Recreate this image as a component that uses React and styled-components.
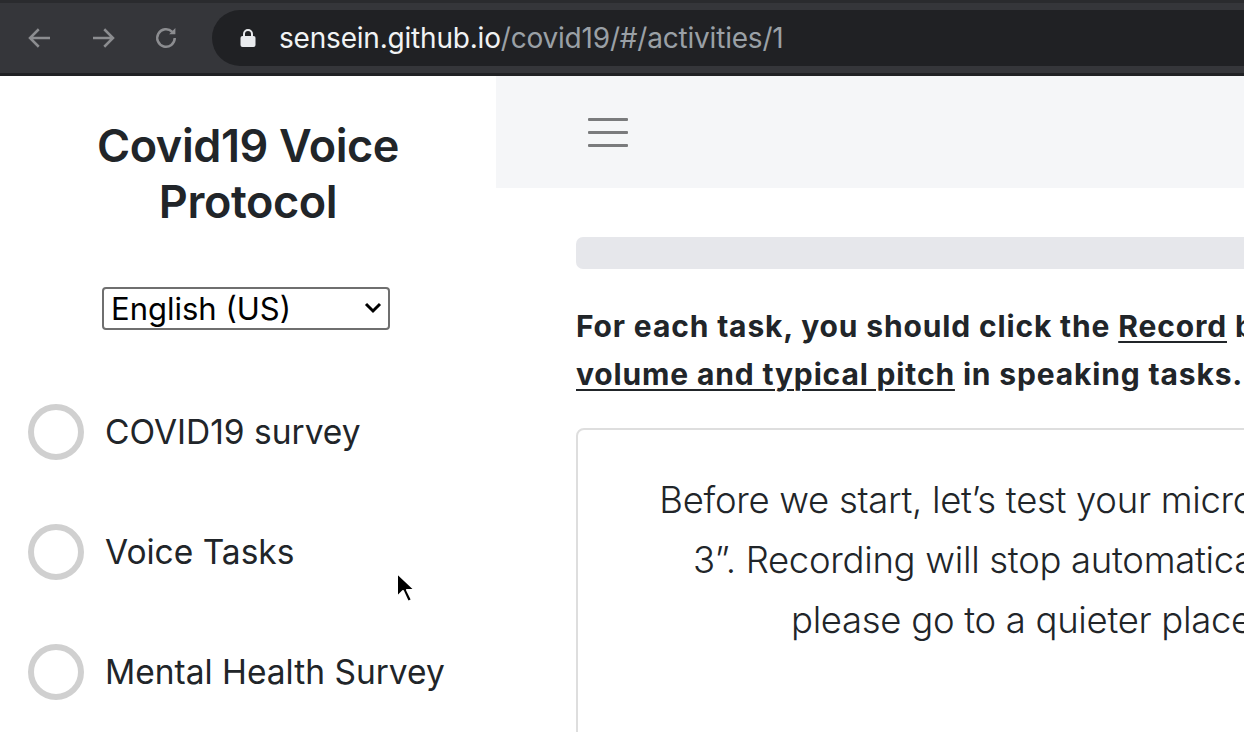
import styled, { createGlobalStyle } from 'styled-components';

const GlobalStyle = createGlobalStyle`
  html, body {
    margin: 0;
    padding: 0;
    overflow: hidden;
    background: #fff;
  }
  body {
    font-family: Inter, "Liberation Sans", Arial, sans-serif;
    color: #212529;
  }
  * { box-sizing: border-box; }
`;

const Window = styled.div`
  width: 1244px;
  height: 732px;
  overflow: hidden;
  position: relative;
  display: flex;
  flex-direction: column;
`;

const BrowserBar = styled.div`
  height: 76px;
  flex: none;
  background: #35363a;
  border-top: 3px solid #2a2b2e;
  border-bottom: 3px solid #202124;
  display: flex;
  align-items: center;
  padding-left: 24px;
`;

const NavButton = styled.div`
  width: 32px;
  height: 32px;
  display: flex;
  align-items: center;
  justify-content: center;
  margin-right: 31px;
  color: #8c8d90;

  svg {
    width: 30px;
    height: 30px;
  }
`;

const AddressPill = styled.div`
  flex: 1;
  height: 56px;
  margin-left: -1px;
  margin-right: -40px;
  border-radius: 28px;
  background: #202124;
  display: flex;
  align-items: center;
  padding-left: 27px;
  font-size: 28px;
  letter-spacing: -0.2px;
  white-space: nowrap;

  svg {
    width: 18px;
    height: 20px;
    margin-right: 22px;
    color: #e8eaed;
  }
`;

const Host = styled.span`
  color: #f1f3f4;
`;

const Path = styled.span`
  color: #9aa0a6;
`;

const Layout = styled.div`
  flex: 1;
  display: flex;
  min-height: 0;
`;

const Sidebar = styled.aside`
  width: 496px;
  flex: none;
  display: flex;
  flex-direction: column;
  align-items: center;
  padding-top: 42px;
`;

const Title = styled.h1`
  margin: 0;
  width: 400px;
  text-align: center;
  font-size: 45px;
  line-height: 56px;
  font-weight: 600;
  letter-spacing: -0.4px;
  color: #212529;
`;

const SelectWrap = styled.div`
  position: relative;
  margin: 57px 4px 0 0;
  width: 288px;
  height: 43px;
`;

const LanguageSelect = styled.select`
  appearance: none;
  width: 100%;
  height: 100%;
  border: 2px solid #6f6f6f;
  border-radius: 4px;
  background: #fff;
  font-family: Inter, "Liberation Sans", Arial, sans-serif;
  font-size: 31px;
  color: #000;
  padding: 0 0 0 7px;
`;

const Chevron = styled.svg`
  position: absolute;
  right: 8px;
  top: 14px;
  width: 18px;
  height: 14px;
  pointer-events: none;
`;

const ActivityList = styled.ul`
  list-style: none;
  margin: 74px 0 0 0;
  padding: 0 0 0 28px;
  align-self: stretch;
  display: flex;
  flex-direction: column;
  gap: 64px;
`;

const Activity = styled.li`
  display: flex;
  align-items: center;
  height: 56px;
  font-size: 33.5px;
  color: #212529;
`;

const Circle = styled.span`
  width: 56px;
  height: 56px;
  flex: none;
  border-radius: 50%;
  border: 6px solid #d0d0d0;
  margin-right: 21px;
`;

const Main = styled.main`
  flex: 1;
  min-width: 0;
  overflow: hidden;
  display: flex;
  flex-direction: column;
`;

const Navbar = styled.nav`
  height: 112px;
  flex: none;
  background: #f5f6f8;
  display: flex;
  align-items: center;
  padding-left: 92px;
`;

const Hamburger = styled.div`
  width: 40px;
  display: flex;
  flex-direction: column;
  gap: 10px;

  span {
    display: block;
    height: 3px;
    background: #7a7b7d;
    border-radius: 1px;
  }
`;

const Content = styled.div`
  width: 1208px;
  flex: none;
  padding: 49px 0 0 80px;
`;

const Progress = styled.div`
  height: 32px;
  border-radius: 7px;
  background: #e6e7eb;
`;

const Instructions = styled.p`
  margin: 33px 0 0 0;
  font-size: 30px;
  line-height: 48px;
  font-weight: 700;
  letter-spacing: 0.85px;
  white-space: nowrap;

  u {
    text-underline-offset: 4px;
    text-decoration-thickness: 2px;
  }
`;

const Card = styled.div`
  margin-top: 30px;
  border: 2px solid #dedede;
  border-radius: 8px;
  height: 340px;
  padding: 40px 20px 0;
`;

const Prompt = styled.p`
  margin: 0;
  text-align: center;
  font-size: 36.5px;
  line-height: 60px;
  font-weight: 300;
  letter-spacing: -0.3px;
  white-space: nowrap;
`;

const Cursor = styled.svg`
  position: absolute;
  left: 395px;
  top: 571px;
  width: 22px;
  height: 34px;
`;

const activities = ['COVID19 survey', 'Voice Tasks', 'Mental Health Survey'];

function App() {
  return (
    <Window>
      <GlobalStyle />
      <BrowserBar>
        <NavButton>
          <svg viewBox="0 0 24 24" fill="none" stroke="currentColor" strokeWidth="2">
            <path d="M20 12H4M11 5l-7 7 7 7" />
          </svg>
        </NavButton>
        <NavButton>
          <svg viewBox="0 0 24 24" fill="none" stroke="currentColor" strokeWidth="2">
            <path d="M4 12h16M13 5l7 7-7 7" />
          </svg>
        </NavButton>
        <NavButton>
          <svg viewBox="0 0 24 24" fill="none" stroke="currentColor" strokeWidth="2">
            <path d="M19 12a7 7 0 1 1-2.05-4.95" />
            <path d="M19.5 4v5h-5z" fill="currentColor" stroke="none" />
          </svg>
        </NavButton>
        <AddressPill>
          <svg viewBox="0 0 18 20" fill="currentColor">
            <path d="M4 8V6a5 5 0 0 1 10 0v2h-2V6a3 3 0 0 0-6 0v2z" />
            <rect x="1.5" y="8" width="15" height="11" rx="2" />
          </svg>
          <Host>sensein.github.io</Host>
          <Path>/covid19/#/activities/1</Path>
        </AddressPill>
      </BrowserBar>

      <Layout>
        <Sidebar>
          <Title>Covid19 Voice Protocol</Title>
          <SelectWrap>
            <LanguageSelect defaultValue="en">
              <option value="en">English (US)</option>
            </LanguageSelect>
            <Chevron viewBox="0 0 18 14" fill="none" stroke="#000" strokeWidth="3">
              <path d="M2 3l7 7 7-7" />
            </Chevron>
          </SelectWrap>
          <ActivityList>
            {activities.map((name) => (
              <Activity key={name}>
                <Circle />
                {name}
              </Activity>
            ))}
          </ActivityList>
        </Sidebar>

        <Main>
          <Navbar>
            <Hamburger>
              <span />
              <span />
              <span />
            </Hamburger>
          </Navbar>
          <Content>
            <Progress />
            <Instructions>
              For each task, you should click the <u>Record</u> button and speak with your normal
              <br />
              <u>volume and typical pitch</u> in speaking tasks.
            </Instructions>
            <Card>
              <Prompt>
                Before we start, let’s test your microphone by saying “1, 2,
                <br />
                3”. Recording will stop automatically. If it is very noisy,
                <br />
                please go to a quieter place and try again.
              </Prompt>
            </Card>
          </Content>
        </Main>
      </Layout>

      <Cursor viewBox="0 0 22 34">
        <path d="M2 2v24l6-6 5 11 4-2-5-10h8z" fill="#000" stroke="#fff" strokeWidth="2" strokeLinejoin="round" />
      </Cursor>
    </Window>
  );
}

export default App;
